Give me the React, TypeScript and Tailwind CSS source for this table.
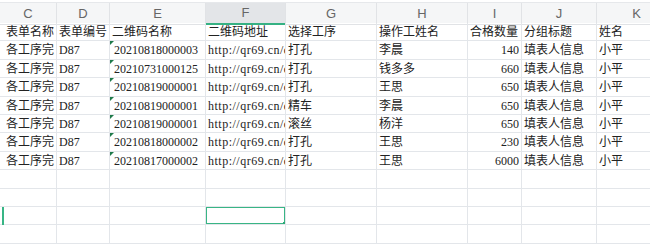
import React from 'react';

type Row = {
  form: string;
  code: string;
  qrName: string;
  qrUrl: string;
  step: string;
  worker: string;
  qty: string;
  group: string;
  name: string;
};

const letters = ['C', 'D', 'E', 'F', 'G', 'H', 'I', 'J', 'K'];

const rows: Row[] = [
  { form: '各工序完', code: 'D87', qrName: '20210818000003', qrUrl: 'http://qr69.cn/q/a8s7d', step: '打孔', worker: '李晨', qty: '140', group: '填表人信息', name: '小平' },
  { form: '各工序完', code: 'D87', qrName: '20210731000125', qrUrl: 'http://qr69.cn/q/b2k9x', step: '打孔', worker: '钱多多', qty: '660', group: '填表人信息', name: '小平' },
  { form: '各工序完', code: 'D87', qrName: '20210819000001', qrUrl: 'http://qr69.cn/q/c4m1z', step: '打孔', worker: '王思', qty: '650', group: '填表人信息', name: '小平' },
  { form: '各工序完', code: 'D87', qrName: '20210819000001', qrUrl: 'http://qr69.cn/q/c4m1z', step: '精车', worker: '李晨', qty: '650', group: '填表人信息', name: '小平' },
  { form: '各工序完', code: 'D87', qrName: '20210819000001', qrUrl: 'http://qr69.cn/q/c4m1z', step: '滚丝', worker: '杨洋', qty: '650', group: '填表人信息', name: '小平' },
  { form: '各工序完', code: 'D87', qrName: '20210818000002', qrUrl: 'http://qr69.cn/q/d7p3w', step: '打孔', worker: '王思', qty: '230', group: '填表人信息', name: '小平' },
  { form: '各工序完', code: 'D87', qrName: '20210817000002', qrUrl: 'http://qr69.cn/q/e5r8t', step: '打孔', worker: '王思', qty: '6000', group: '填表人信息', name: '小平' },
];

const cols = 'grid grid-cols-[57px_53px_96px_80px_91px_91px_54px_75px_80px]';
const cell = 'relative h-[18.4px] border-r border-b border-[#e3e6ea] px-[2px] leading-[18px] whitespace-nowrap overflow-hidden';

function NumberAsText() {
  // green corner flag for numbers stored as text
  return (
    <span className="absolute left-0 top-0 w-0 h-0 border-t-[4px] border-r-[4px] border-t-[#1f7a4a] border-r-transparent" />
  );
}

function DataRow({ r }: { r: Row }) {
  return (
    <div className={cols}>
      <div className={`${cell} pl-[6px]`}>{r.form}</div>
      <div className={cell}>{r.code}</div>
      <div className={`${cell} pl-[4px]`}>
        <NumberAsText />
        {r.qrName}
      </div>
      <div className={`${cell} tracking-[0.5px]`}>{r.qrUrl}</div>
      <div className={cell}>{r.step}</div>
      <div className={cell}>{r.worker}</div>
      <div className={`${cell} text-right`}>{r.qty}</div>
      <div className={cell}>{r.group}</div>
      <div className={cell}>{r.name}</div>
    </div>
  );
}

function EmptyRow({ selected }: { selected?: boolean }) {
  return (
    <div className={`${cols} relative`}>
      {letters.map((l) => (
        <div key={l} className={cell}>
          {selected && l === 'F' ? (
            <>
              <span className="absolute inset-[-1px] border-2 border-[#38b585]" />
              <span className="absolute right-[-3px] bottom-[-3px] w-[5px] h-[5px] bg-[#2ea977]" />
            </>
          ) : null}
        </div>
      ))}
      {selected ? <span className="absolute left-[2px] top-0 w-[2px] h-full bg-[#38b585]" /> : null}
    </div>
  );
}

export default function App() {
  return (
    <div
      className="w-[650px] h-[251px] overflow-hidden bg-white text-[12px] text-[#222]"
      style={{ fontFamily: '"Liberation Serif", "Noto Sans CJK SC", serif' }}
    >
      <div className="h-[3px] bg-white border-b border-[#e6e8eb]" />
      <div className={`${cols} h-[20px] bg-[#f5f6f7] text-[13px] text-[#666]`} style={{ fontFamily: '"Liberation Sans", "Noto Sans", sans-serif' }}>
        {letters.map((l) => (
          <div
            key={l}
            className={
              l === 'F'
                ? 'flex items-center justify-center border-r border-[#e1e3e6] bg-[#e3e5e8] border-b-2 border-b-[#35b183]'
                : 'flex items-center justify-center border-r border-b border-[#e1e3e6]'
            }
          >
            {l}
          </div>
        ))}
      </div>

      <div className={cols}>
        {['表单名称', '表单编号', '二维码名称', '二维码地址', '选择工序', '操作工姓名', '合格数量', '分组标题', '姓名'].map((h, i) => (
          <div key={h} className={i === 0 ? `${cell} pl-[6px]` : cell}>{h}</div>
        ))}
      </div>

      {rows.map((r, i) => (
        <DataRow key={i} r={r} />
      ))}

      <EmptyRow />
      <EmptyRow />
      <EmptyRow selected />
      <EmptyRow />
    </div>
  );
}
